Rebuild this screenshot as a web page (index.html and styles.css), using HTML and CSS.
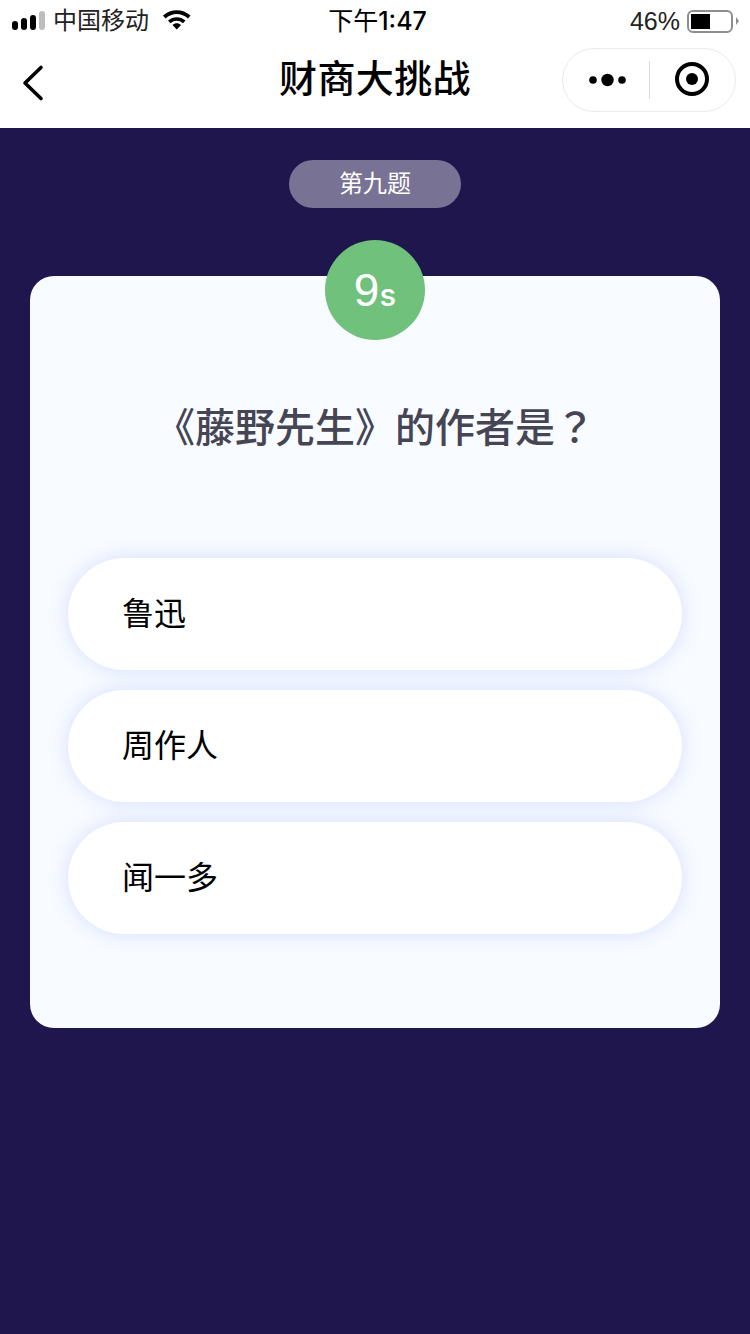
FILE: index.html
```html
<!DOCTYPE html>
<html lang="zh-CN">
<head>
<meta charset="utf-8">
<title>财商大挑战</title>
<link rel="stylesheet" href="styles.css">
</head>
<body>
<header class="top">
  <div class="status">
    <div class="status-left">
      <svg class="signal" width="34" height="20" viewBox="0 0 34 20"><rect x="0" y="10" width="6" height="9" rx="3" fill="#000"/><rect x="9" y="7" width="6" height="12" rx="3" fill="#000"/><rect x="18" y="4" width="6" height="15" rx="3" fill="#000"/><rect x="27" y="0" width="6" height="19" rx="3" fill="#bdbdbd"/></svg>
      <span class="carrier">中国移动</span>
      <svg class="wifi" width="30" height="22" viewBox="0 0 30 22"><path d="M1 7.500C9 .5 20.500 .5 28.500 7.500L26 10.500C19.500 4.500 10 4.500 3.500 10.500Z" fill="#000"/><path d="M6 12.500C11 8 18.500 8 23.500 12.500L21 15.300C17.300 12 12.200 12 8.500 15.300Z" fill="#000"/><path d="M10.500 17C13 14.800 16.500 14.800 19 17L14.750 21.500Z" fill="#000"/></svg>
    </div>
    <div class="clock"><span class="clock-cjk">下午</span>1:47</div>
    <div class="status-right">
      <span class="pct">46%</span>
      <span class="battery"><span class="battery-fill"></span></span>
      <span class="battery-tip"></span>
    </div>
  </div>
  <nav class="nav">
    <svg class="back" width="24" height="44" viewBox="0 0 24 44"><path d="M21 9.500 5 25 21 40.500" fill="none" stroke="#000" stroke-width="3.600" stroke-linecap="round" stroke-linejoin="round"/></svg>
    <h1 class="title">财商大挑战</h1>
    <div class="capsule">
      <svg class="dots" width="40" height="16" viewBox="0 0 40 16"><circle cx="5" cy="8" r="3.800" fill="#000"/><circle cx="19.500" cy="8" r="6.200" fill="#000"/><circle cx="34" cy="8" r="3.800" fill="#000"/></svg>
      <span class="sep"></span>
      <svg class="target" width="36" height="36" viewBox="0 0 36 36"><circle cx="18" cy="18" r="15" fill="none" stroke="#000" stroke-width="4"/><circle cx="18" cy="18" r="6" fill="#000"/></svg>
    </div>
  </nav>
</header>
<main class="stage">
  <div class="badge">第九题</div>
  <section class="card">
    <div class="timer"><span class="num">9</span><span class="unit">s</span></div>
    <h2 class="question">《藤野先生》的作者是<span class="qmark" lang="zh-TW">？</span></h2>
    <ul class="options">
      <li class="option">鲁迅</li>
      <li class="option">周作人</li>
      <li class="option">闻一多</li>
    </ul>
  </section>
</main>
</body>
</html>
```
FILE: styles.css
```css
* { box-sizing: border-box; }
html, body { margin: 0; padding: 0; }
body {
  width: 750px;
  height: 1334px;
  overflow: hidden;
  background: #1e164d;
  font-family: "Liberation Sans", "Noto Sans CJK SC", sans-serif;
  display: flex;
  flex-direction: column;
}
.top { background: #fff; height: 128px; flex: none; }
.status {
  height: 40px;
  display: grid;
  grid-template-columns: 1fr auto 1fr;
  align-items: center;
  color: #000;
}
.status-left { display: flex; align-items: center; padding-left: 12px; }
.signal { margin-right: 7px; }
.carrier { font-size: 24px; line-height: 42px; color: #222; }
.wifi { margin-left: 13px; margin-top: -4px; }
.clock {
  font-family: "Inter", "Noto Sans CJK SC", sans-serif;
  font-size: 25px;
  line-height: 42px;
  font-weight: 500;
  padding-left: 5px;
}
.clock-cjk { font-weight: 400; }
.status-right { display: flex; align-items: center; justify-content: flex-end; padding-right: 11px; }
.pct { font-size: 25px; line-height: 42px; color: #222; margin-right: 7px; }
.battery {
  width: 46px;
  height: 23px;
  border: 2px solid #8e8e8e;
  border-radius: 6px;
  padding: 2px;
  display: block;
}
.battery-fill { display: block; width: 19px; height: 100%; background: #000; }
.battery-tip {
  width: 0; height: 0;
  border-left: 3px solid #8e8e8e;
  border-top: 4px solid transparent;
  border-bottom: 4px solid transparent;
  margin-left: 3px;
}
.nav {
  height: 88px;
  display: flex;
  align-items: center;
  justify-content: space-between;
  padding: 0 14px 8px 20px;
  position: relative;
}
.title {
  position: absolute;
  left: 0; right: 0; top: 14px;
  margin: 0;
  text-align: center;
  font-size: 38px;
  line-height: 50px;
  font-weight: 500;
  letter-spacing: .4px;
  color: #000;
}
.capsule {
  width: 174px;
  height: 64px;
  border: 1px solid #ebebeb;
  border-radius: 32px;
  display: flex;
  align-items: center;
  padding-left: 25px;
}
.target { margin-top: -2px; }
.sep { width: 1px; height: 38px; background: #d9d9d9; margin-left: 21px; margin-right: 24px; }
.stage {
  flex: 1;
  padding: 32px 30px 0;
  display: flex;
  flex-direction: column;
  align-items: center;
}
.badge {
  width: 172px;
  height: 48px;
  border-radius: 24px;
  background: #787394;
  color: #fff;
  font-size: 24px;
  line-height: 48px;
  text-align: center;
}
.card {
  position: relative;
  margin-top: 68px;
  width: 690px;
  height: 752px;
  background: #f8fbff;
  border-radius: 24px;
  padding: 120px 38px 0;
}
.timer {
  position: absolute;
  top: -36px;
  left: 295px;
  width: 100px;
  height: 100px;
  border-radius: 50%;
  background: #70c17b;
  color: #fff;
  display: flex;
  align-items: baseline;
  justify-content: center;
  line-height: 100px;
}
.num { font-size: 46px; }
.unit { font-family: "Inter", sans-serif; font-size: 31px; font-weight: 500; }
.question {
  margin: 0;
  height: 64px;
  text-align: center;
  font-size: 40px;
  line-height: 64px;
  font-weight: 500;
  color: #454553;
  white-space: nowrap;
}
.qmark { font-family: "Noto Sans CJK TC", sans-serif; line-height: 0; }
.options {
  list-style: none;
  margin: 98px 0 0;
  padding: 0;
  display: flex;
  flex-direction: column;
  gap: 20px;
}
.option {
  height: 112px;
  border-radius: 56px;
  background: #fff;
  box-shadow: 0 0 20px rgba(170, 185, 250, .42);
  padding-left: 54px;
  font-size: 32px;
  line-height: 112px;
  color: #000;
}
```
